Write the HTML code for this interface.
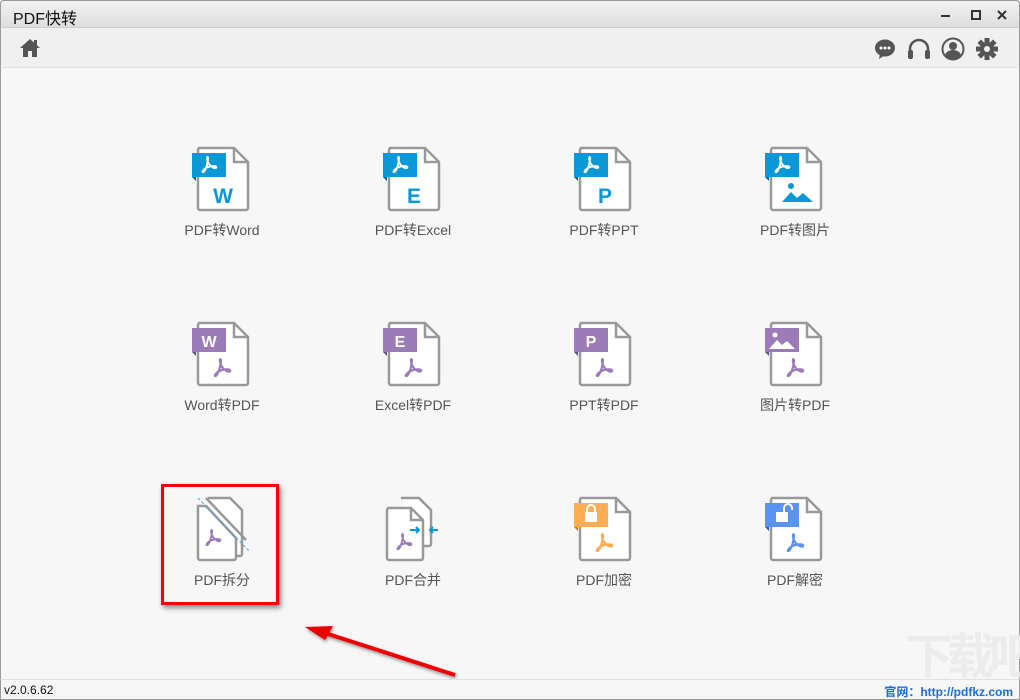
<!DOCTYPE html>
<html style="overflow:hidden;height:700px"><head><meta charset="utf-8"><style>
*{margin:0;padding:0;box-sizing:border-box}
body{width:1020px;height:700px;overflow:hidden;background:#f7f7f7;font-family:"Liberation Sans","Noto Sans CJK SC",sans-serif;position:relative}
#title{position:absolute;left:0;top:0;width:1020px;height:28px;background:linear-gradient(#f2f2f2,#dedede);border:1px solid #9a9a9a;border-bottom:1px solid #cfcfcf;border-radius:4px 4px 0 0}
#title span{position:absolute;left:12px;top:4px;font-size:16px;color:#111}
#tool{position:absolute;left:0;top:28px;width:1020px;height:40px;background:#f0f0f0;border-bottom:1px solid #e2e2e2;border-left:1px solid #9a9a9a;border-right:1px solid #9a9a9a}
#foot{position:absolute;left:0;top:679px;width:1020px;height:21px;background:#f7f7f7;border-top:1px solid #e0e0e0;border-left:1px solid #9a9a9a;border-right:1px solid #9a9a9a;border-bottom:1px solid #9a9a9a}
#foot .v{position:absolute;left:3px;top:3px;font-size:12px;color:#111}
#foot .u{position:absolute;right:6px;top:3px;font-size:12px;color:#1a6ee0;font-weight:bold}
.side{position:absolute;top:68px;width:1px;height:612px;background:#9a9a9a}
.it{position:absolute;width:120px;text-align:center;font-size:14px;color:#555}
.it svg{display:block;margin:0 auto 8px}
</style></head><body>
<div id="title"><span>PDF快转</span>
<svg style="position:absolute;left:938px;top:8px" width="76" height="14"><rect x="2" y="6" width="9" height="2" fill="#333"/><rect x="33" y="2" width="8" height="8" fill="none" stroke="#333" stroke-width="2"/><path d="M59 2l8 8M67 2l-8 8" stroke="#333" stroke-width="2"/></svg></div>
<div id="tool">
<svg style="position:absolute;left:18px;top:10px" width="22" height="20" viewBox="0 0 22 20"><path d="M11 1L1 10h3v9h5v-6h4v6h5v-9h3z" fill="#555"/><rect x="15" y="2" width="3" height="5" fill="#555"/></svg>
<svg style="position:absolute;left:872px;top:9px" width="130" height="24" viewBox="0 0 130 24">
<ellipse cx="12" cy="11" rx="10" ry="8.5" fill="#555"/><path d="M7 17l-1 5 6-4z" fill="#555"/><circle cx="8" cy="11" r="1.5" fill="#fff"/><circle cx="12" cy="11" r="1.5" fill="#fff"/><circle cx="16" cy="11" r="1.5" fill="#fff"/>
<path d="M37 18v-6a9 9 0 0 1 18 0v6" fill="none" stroke="#555" stroke-width="2.5"/><rect x="35" y="13" width="5" height="9" rx="2" fill="#555"/><rect x="52" y="13" width="5" height="9" rx="2" fill="#555"/>
<circle cx="80" cy="12" r="10.5" fill="none" stroke="#555" stroke-width="2"/><circle cx="80" cy="9" r="4" fill="#555"/><path d="M72 19a8 6 0 0 1 16 0a10 10 0 0 1-16 0z" fill="#555"/>
<g transform="translate(114 12)" fill="#555"><circle r="7"/><g id="t"><rect x="-2.5" y="-11" width="5" height="22"/></g><use href="#t" transform="rotate(45)"/><use href="#t" transform="rotate(90)"/><use href="#t" transform="rotate(135)"/><circle r="3" fill="#f0f0f0"/></g>
</svg></div>
<div class="side" style="left:0"></div><div class="side" style="left:1019px"></div>

<svg width="0" height="0" style="position:absolute"><defs>
<symbol id="doc" viewBox="0 0 60 66"><path d="M6 2h36l14 14v46a2 2 0 0 1-2 2H8a2 2 0 0 1-2-2V4a2 2 0 0 1 2-2z" fill="#fff" stroke="#999" stroke-width="2.5"/><path d="M42 2v14h14" fill="none" stroke="#999" stroke-width="2.5"/></symbol>
<symbol id="acr" viewBox="0 0 20 20"><path d="M9 2c-2 0-1 5 1 8 2 3 7 6 8 4s-4-2-8-1c-4 1-8 5-7 6s4-4 5-9c1-4 1-8 1-8" fill="none" stroke="currentColor" stroke-width="2.2" stroke-linejoin="round"/></symbol>
</defs></svg>

<div class="it" style="left:162px;top:146px"><svg width="60" height="66" viewBox="0 0 60 66" style="margin-left:30px"><use href="#doc"/><rect x="0" y="7" width="34" height="24" fill="#0a98d6"/><path d="M0 31h4v4z" fill="#06679a"/><use href="#acr" x="8" y="9" width="18" height="18" style="color:#fff"/><text x="31" y="57" text-anchor="middle" font-size="21" font-weight="bold" fill="#0a98d6" font-family="Liberation Sans">W</text></svg>PDF转Word</div>
<div class="it" style="left:353px;top:146px"><svg width="60" height="66" viewBox="0 0 60 66" style="margin-left:30px"><use href="#doc"/><rect x="0" y="7" width="34" height="24" fill="#0a98d6"/><path d="M0 31h4v4z" fill="#06679a"/><use href="#acr" x="8" y="9" width="18" height="18" style="color:#fff"/><text x="31" y="57" text-anchor="middle" font-size="21" font-weight="bold" fill="#0a98d6" font-family="Liberation Sans">E</text></svg>PDF转Excel</div>
<div class="it" style="left:544px;top:146px"><svg width="60" height="66" viewBox="0 0 60 66" style="margin-left:30px"><use href="#doc"/><rect x="0" y="7" width="34" height="24" fill="#0a98d6"/><path d="M0 31h4v4z" fill="#06679a"/><use href="#acr" x="8" y="9" width="18" height="18" style="color:#fff"/><text x="31" y="57" text-anchor="middle" font-size="21" font-weight="bold" fill="#0a98d6" font-family="Liberation Sans">P</text></svg>PDF转PPT</div>
<div class="it" style="left:735px;top:146px"><svg width="60" height="66" viewBox="0 0 60 66" style="margin-left:30px"><use href="#doc"/><rect x="0" y="7" width="34" height="24" fill="#0a98d6"/><path d="M0 31h4v4z" fill="#06679a"/><use href="#acr" x="8" y="9" width="18" height="18" style="color:#fff"/><circle cx="26" cy="40" r="3" fill="#0a98d6"/><path d="M17 56l9-10 6 6 6-5 10 9z" fill="#0a98d6"/></svg>PDF转图片</div>
<div class="it" style="left:162px;top:321px"><svg width="60" height="66" viewBox="0 0 60 66" style="margin-left:30px"><use href="#doc"/><rect x="0" y="7" width="34" height="24" fill="#9b7bb8"/><path d="M0 31h4v4z" fill="#6a4d87"/><text x="17" y="26" text-anchor="middle" font-size="16" font-weight="bold" fill="#fff" font-family="Liberation Sans">W</text><use href="#acr" x="20" y="36" width="20" height="20" style="color:#9b7bb8"/></svg>Word转PDF</div>
<div class="it" style="left:353px;top:321px"><svg width="60" height="66" viewBox="0 0 60 66" style="margin-left:30px"><use href="#doc"/><rect x="0" y="7" width="34" height="24" fill="#9b7bb8"/><path d="M0 31h4v4z" fill="#6a4d87"/><text x="17" y="26" text-anchor="middle" font-size="16" font-weight="bold" fill="#fff" font-family="Liberation Sans">E</text><use href="#acr" x="20" y="36" width="20" height="20" style="color:#9b7bb8"/></svg>Excel转PDF</div>
<div class="it" style="left:544px;top:321px"><svg width="60" height="66" viewBox="0 0 60 66" style="margin-left:30px"><use href="#doc"/><rect x="0" y="7" width="34" height="24" fill="#9b7bb8"/><path d="M0 31h4v4z" fill="#6a4d87"/><text x="17" y="26" text-anchor="middle" font-size="16" font-weight="bold" fill="#fff" font-family="Liberation Sans">P</text><use href="#acr" x="20" y="36" width="20" height="20" style="color:#9b7bb8"/></svg>PPT转PDF</div>
<div class="it" style="left:735px;top:321px"><svg width="60" height="66" viewBox="0 0 60 66" style="margin-left:30px"><use href="#doc"/><rect x="0" y="7" width="34" height="24" fill="#9b7bb8"/><path d="M0 31h4v4z" fill="#6a4d87"/><circle cx="10" cy="14" r="2.5" fill="#fff"/><path d="M4 28l8-9 5 5 5-4 8 8z" fill="#fff"/><use href="#acr" x="20" y="36" width="20" height="20" style="color:#9b7bb8"/></svg>图片转PDF</div>
<div class="it" style="left:162px;top:496px"><svg width="60" height="66" viewBox="0 0 60 66" style="margin-left:30px"><path d="M16 2h22l12 12v44a2 2 0 0 1-2 2h-4" fill="#fff" stroke="#999" stroke-width="2.5"/><path d="M6 10h8l30 32v20a2 2 0 0 1-2 2H8a2 2 0 0 1-2-2z" fill="#fff" stroke="#999" stroke-width="2.5"/><path d="M6 2l52 54" stroke="#4aa8d8" stroke-width="1" stroke-dasharray="3 2"/><path d="M14 2l40 42" stroke="#999" stroke-width="2.5"/><use href="#acr" x="12" y="32" width="18" height="18" style="color:#9b7bb8"/></svg>PDF拆分</div>
<div class="it" style="left:353px;top:496px"><svg width="60" height="66" viewBox="0 0 60 66" style="margin-left:30px"><path d="M18 2h18l12 12v34a2 2 0 0 1-2 2H40" fill="#fff" stroke="#999" stroke-width="2.5"/><path d="M4 12h24l12 12v38a2 2 0 0 1-2 2H6a2 2 0 0 1-2-2V14a2 2 0 0 1 2-2z" fill="#fff" stroke="#999" stroke-width="2.5"/><path d="M28 12v12h12" fill="none" stroke="#999" stroke-width="2.5"/><path d="M27 34h9M33 31l3 3-3 3M55 34h-8M50 31l-3 3 3 3" stroke="#0a98d6" stroke-width="2" fill="none"/><use href="#acr" x="12" y="36" width="18" height="18" style="color:#9b7bb8"/></svg>PDF合并</div>
<div class="it" style="left:544px;top:496px"><svg width="60" height="66" viewBox="0 0 60 66" style="margin-left:30px"><use href="#doc"/><rect x="0" y="7" width="34" height="24" fill="#ffad55"/><path d="M0 31h4v4z" fill="#c87a20"/><rect x="11" y="16" width="12" height="10" fill="#fff"/><path d="M13 16v-3a4 4 0 0 1 8 0v3" fill="none" stroke="#fff" stroke-width="2"/><use href="#acr" x="20" y="36" width="20" height="20" style="color:#ffad55"/></svg>PDF加密</div>
<div class="it" style="left:735px;top:496px"><svg width="60" height="66" viewBox="0 0 60 66" style="margin-left:30px"><use href="#doc"/><rect x="0" y="7" width="34" height="24" fill="#5b93f0"/><path d="M0 31h4v4z" fill="#2a5fb8"/><rect x="11" y="16" width="12" height="10" fill="#fff"/><path d="M19 16v-4a4 4 0 0 1 8 0v2" fill="none" stroke="#fff" stroke-width="2"/><use href="#acr" x="20" y="36" width="20" height="20" style="color:#5b93f0"/></svg>PDF解密</div>

<div style="position:absolute;left:161px;top:484px;width:118px;height:121px;border:3px solid #f00;box-shadow:2px 3px 5px rgba(0,0,0,.45)"></div>
<svg style="position:absolute;left:0;top:0" width="1020" height="700"><defs><filter id="s"><feDropShadow dx="1" dy="2" stdDeviation="1.5" flood-opacity=".4"/></filter></defs><g filter="url(#s)"><path d="M455 675L325 633" stroke="#e00" stroke-width="4"/><path d="M305 627l28-1-8 14z" fill="#e00"/></g></svg>
<div style="position:absolute;left:905px;top:628px;width:115px;height:70px;overflow:hidden;white-space:nowrap;font-size:48px;line-height:60px;color:#ececec;font-weight:bold;letter-spacing:-6px">下载吧</div>
<div id="foot"><span class="v">v2.0.6.62</span><span class="u">官网：http://pdfkz.com</span></div>
</body></html>
